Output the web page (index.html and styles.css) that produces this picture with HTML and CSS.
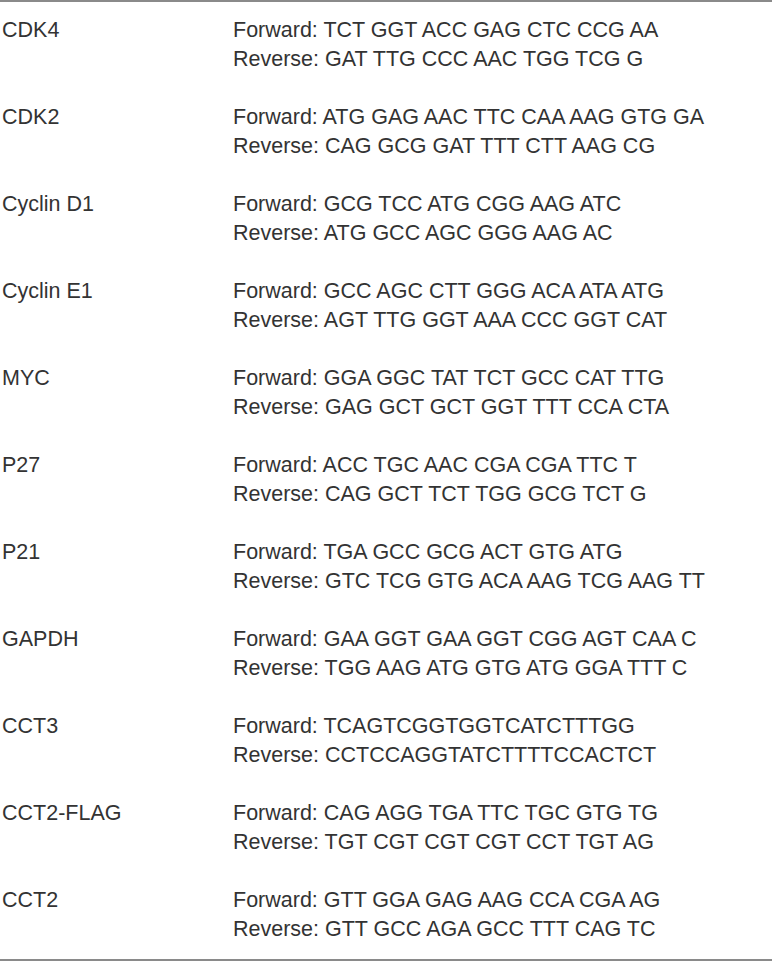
FILE: index.html
```html
<!DOCTYPE html>
<html lang="en">
<head>
    <meta charset="UTF-8">
    <title>Primer sequences</title>
    <link rel="stylesheet" href="styles.css">
</head>
<body>
    <table class="primers">
        <tbody>
            <tr>
                <td class="gene">CDK4</td>
                <td class="seq">Forward: TCT GGT ACC GAG CTC CCG AA<br>Reverse: GAT TTG CCC AAC TGG TCG G</td>
            </tr>
            <tr>
                <td class="gene">CDK2</td>
                <td class="seq">Forward: ATG GAG AAC TTC CAA AAG GTG GA<br>Reverse: CAG GCG GAT TTT CTT AAG CG</td>
            </tr>
            <tr>
                <td class="gene">Cyclin D1</td>
                <td class="seq">Forward: GCG TCC ATG CGG AAG ATC<br>Reverse: ATG GCC AGC GGG AAG AC</td>
            </tr>
            <tr>
                <td class="gene">Cyclin E1</td>
                <td class="seq">Forward: GCC AGC CTT GGG ACA ATA ATG<br>Reverse: AGT TTG GGT AAA CCC GGT CAT</td>
            </tr>
            <tr>
                <td class="gene">MYC</td>
                <td class="seq">Forward: GGA GGC TAT TCT GCC CAT TTG<br>Reverse: GAG GCT GCT GGT TTT CCA CTA</td>
            </tr>
            <tr>
                <td class="gene">P27</td>
                <td class="seq">Forward: ACC TGC AAC CGA CGA TTC T<br>Reverse: CAG GCT TCT TGG GCG TCT G</td>
            </tr>
            <tr>
                <td class="gene">P21</td>
                <td class="seq">Forward: TGA GCC GCG ACT GTG ATG<br>Reverse: GTC TCG GTG ACA AAG TCG AAG TT</td>
            </tr>
            <tr>
                <td class="gene">GAPDH</td>
                <td class="seq">Forward: GAA GGT GAA GGT CGG AGT CAA C<br>Reverse: TGG AAG ATG GTG ATG GGA TTT C</td>
            </tr>
            <tr>
                <td class="gene">CCT3</td>
                <td class="seq">Forward: TCAGTCGGTGGTCATCTTTGG<br>Reverse: CCTCCAGGTATCTTTTCCACTCT</td>
            </tr>
            <tr>
                <td class="gene">CCT2-FLAG</td>
                <td class="seq">Forward: CAG AGG TGA TTC TGC GTG TG<br>Reverse: TGT CGT CGT CGT CCT TGT AG</td>
            </tr>
            <tr>
                <td class="gene">CCT2</td>
                <td class="seq">Forward: GTT GGA GAG AAG CCA CGA AG<br>Reverse: GTT GCC AGA GCC TTT CAG TC</td>
            </tr>
        </tbody>
    </table>
</body>
</html>
```

FILE: styles.css
```css
* {
    margin: 0;
    padding: 0;
    box-sizing: border-box;
}

body {
    background: #fff;
    font-family: "Liberation Sans", Arial, sans-serif;
    color: #333;
}

.primers {
    width: 772px;
    border-collapse: collapse;
    border-top: 2px solid #8a8a8a;
    border-bottom: 2px solid #8a8a8a;
}

.primers td {
    vertical-align: top;
    font-size: 21.5px;
    line-height: 29px;
    padding: 14px 0 15px;
}

.gene {
    width: 233px;
    padding-left: 2px !important;
}

.seq {
    white-space: nowrap;
}
```
